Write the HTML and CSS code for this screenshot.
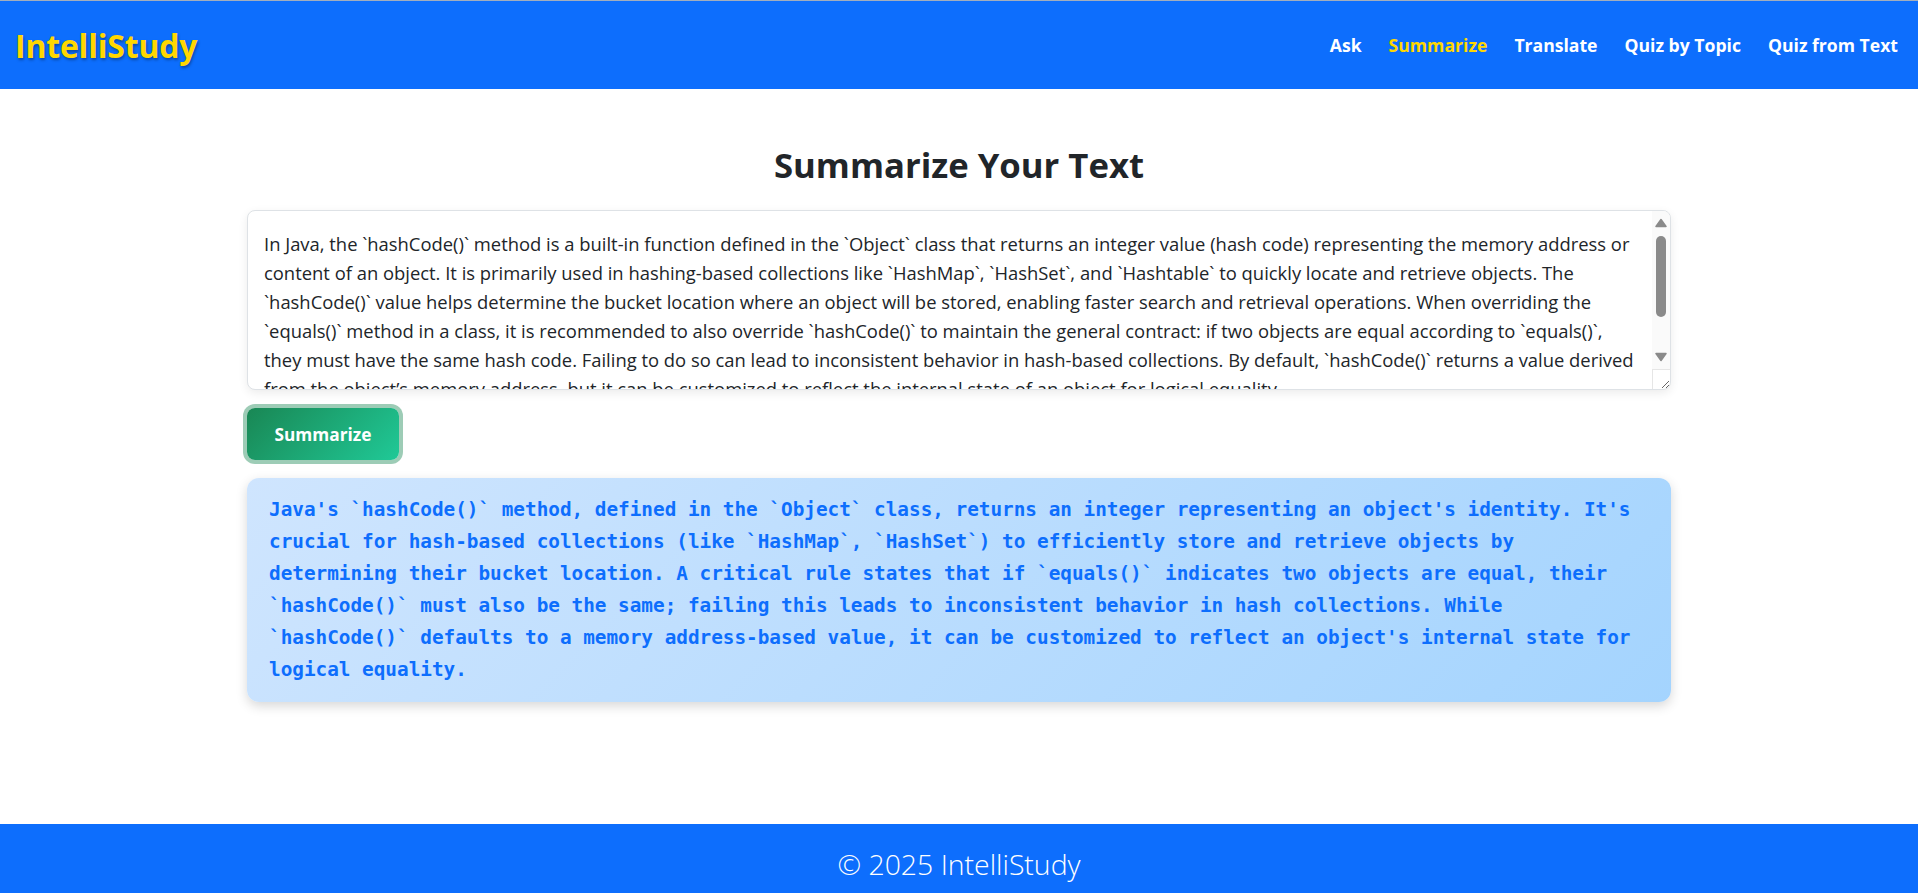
FILE: index.html
```html
<!DOCTYPE html>
<html lang="en">
<head>
<meta charset="utf-8">
<title>IntelliStudy - Summarize</title>
<link rel="stylesheet" href="styles.css">
</head>
<body>
  <header class="navbar">
    <a class="brand" href="#">IntelliStudy</a>
    <nav class="nav-links">
      <a class="nav-link" href="#">Ask</a>
      <a class="nav-link active" href="#">Summarize</a>
      <a class="nav-link" href="#">Translate</a>
      <a class="nav-link" href="#">Quiz by Topic</a>
      <a class="nav-link" href="#">Quiz from Text</a>
    </nav>
  </header>

  <main class="page">
    <div class="container">
      <h2 class="title">Summarize Your Text</h2>
      <div class="input-wrap">
        <textarea class="input-text" spellcheck="false">In Java, the `hashCode()` method is a built-in function defined in the `Object` class that returns an integer value (hash code) representing the memory address or
content of an object. It is primarily used in hashing-based collections like `HashMap`, `HashSet`, and `Hashtable` to quickly locate and retrieve objects. The
`hashCode()` value helps determine the bucket location where an object will be stored, enabling faster search and retrieval operations. When overriding the
`equals()` method in a class, it is recommended to also override `hashCode()` to maintain the general contract: if two objects are equal according to `equals()`,
they must have the same hash code. Failing to do so can lead to inconsistent behavior in hash-based collections. By default, `hashCode()` returns a value derived
from the object’s memory address, but it can be customized to reflect the internal state of an object for logical equality.</textarea>
        <div class="scrollbar" aria-hidden="true">
          <svg class="sb-arrow" width="12" height="10" viewBox="0 0 12 10"><polygon points="6,1.5 11,8.5 1,8.5" fill="#8a8a8a" stroke="#8a8a8a" stroke-width="1.5" stroke-linejoin="round"/></svg>
          <div class="sb-thumb"></div>
          <svg class="sb-arrow down" width="12" height="10" viewBox="0 0 12 10"><polygon points="1,1.5 11,1.5 6,8.5" fill="#8a8a8a" stroke="#8a8a8a" stroke-width="1.5" stroke-linejoin="round"/></svg>
        </div>
        <div class="sb-corner" aria-hidden="true"></div>
      </div>
      <div class="actions">
        <button class="btn-summarize" type="button">Summarize</button>
      </div>
      <div class="result">Java's `hashCode()` method, defined in the `Object` class, returns an integer representing an object's identity. It's crucial for hash-based collections (like `HashMap`, `HashSet`) to efficiently store and retrieve objects by determining their bucket location. A critical rule states that if `equals()` indicates two objects are equal, their `hashCode()` must also be the same; failing this leads to inconsistent behavior in hash collections. While `hashCode()` defaults to a memory address-based value, it can be customized to reflect an object's internal state for logical equality.</div>
    </div>
  </main>

  <footer class="footer">© 2025 IntelliStudy</footer>
</body>
</html>
```
FILE: styles.css
```css
* { box-sizing: border-box; }

html, body { margin: 0; padding: 0; }

body {
  font-family: "Open Sans", "Noto Sans", "DejaVu Sans", sans-serif;
  color: #212529;
  background: #ffffff;
  min-height: 100vh;
  display: flex;
  flex-direction: column;
}

.navbar {
  height: 89px;
  border-top: 1px solid #a3aebd;
  background: #0d6efd;
  display: flex;
  align-items: center;
  justify-content: space-between;
  padding: 0 20px 0 15px;
}

.brand {
  color: #ffd700;
  font-weight: 700;
  font-size: 32px;
  text-decoration: none;
  text-shadow: 1px 2px 3px rgba(0, 0, 0, 0.35);
  letter-spacing: -0.2px;
}

.nav-links {
  display: flex;
  gap: 27px;
}

.nav-link {
  color: #ffffff;
  font-weight: 700;
  font-size: 17.6px;
  text-decoration: none;
}

.nav-link.active { color: #ffd700; }

.page { flex: 1; }

.container {
  max-width: 1424px;
  margin: 0 auto;
  padding-top: 54px;
}

.title {
  margin: 0 0 24px;
  text-align: center;
  font-size: 34.7px;
  line-height: 43px;
  font-weight: 700;
  color: #212529;
}

.input-wrap {
  position: relative;
}

.input-text {
  display: block;
  width: 100%;
  height: 180px;
  margin: 0;
  padding: 18px 14px 8px 16px;
  border: 1px solid #dee2e6;
  border-radius: 8px;
  box-shadow: 0 3px 10px rgba(0, 0, 0, 0.08);
  font-family: "Open Sans", "Noto Sans", sans-serif;
  font-size: 18.4px;
  line-height: 29px;
  color: #212529;
  background: #ffffff;
  resize: vertical;
  overflow: hidden;
  outline: none;
}

.scrollbar {
  position: absolute;
  top: 1px;
  right: 1px;
  width: 18px;
  height: 158px;
  background: #fafafa;
  border-top-right-radius: 7px;
  display: flex;
  flex-direction: column;
  align-items: center;
  pointer-events: none;
}

.sb-arrow { display: block; margin-top: 7px; flex: none; }
.sb-arrow.down { margin-top: 35px; }

.sb-thumb {
  width: 10px;
  height: 81px;
  margin-top: 8px;
  border-radius: 5px;
  background: #8a8a8a;
  flex: none;
}

.sb-corner {
  position: absolute;
  top: 159px;
  right: 1px;
  width: 18px;
  height: 20px;
  border-top: 1px solid #e6e6e6;
  border-left: 1px solid #e6e6e6;
  border-bottom-right-radius: 7px;
  pointer-events: none;
}

.actions {
  margin-top: 18px;
  display: flex;
}

.btn-summarize {
  width: 152px;
  height: 52px;
  border: none;
  border-radius: 8px;
  background: linear-gradient(135deg, #198754, #20c997);
  box-shadow: 0 0 0 4px rgba(60, 153, 110, 0.5);
  color: #ffffff;
  font-family: "Open Sans", "Noto Sans", sans-serif;
  font-size: 17.3px;
  font-weight: 700;
  cursor: pointer;
}

.result {
  margin-top: 18px;
  padding: 16px 26px 16px 22px;
  border-radius: 12px;
  background: linear-gradient(135deg, #cfe5fe, #a4d4fe);
  box-shadow: 0 4px 12px rgba(0, 0, 0, 0.16);
  color: #0d6efd;
  font-family: "DejaVu Sans Mono", "Liberation Mono", monospace;
  font-weight: 700;
  font-size: 19.33px;
  line-height: 32px;
}

.footer {
  height: 69px;
  padding-top: 10px;
  background: #0d6efd;
  color: #ffffff;
  display: flex;
  align-items: center;
  justify-content: center;
  font-size: 28.4px;
  font-weight: 300;
}
```
